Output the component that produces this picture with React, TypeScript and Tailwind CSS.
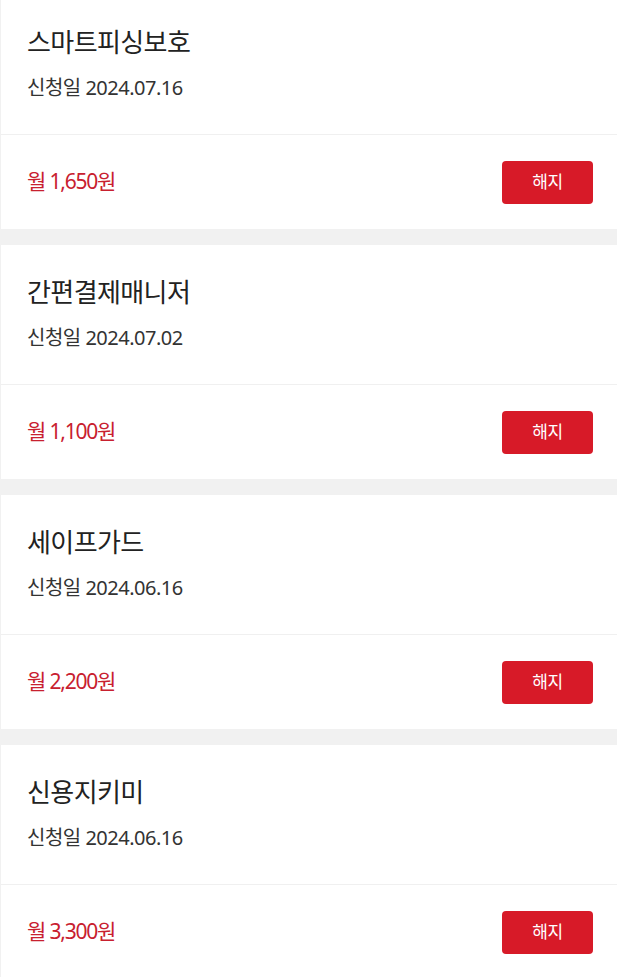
const services = [
  { name: "스마트피싱보호", date: "2024.07.16", price: "1,650" },
  { name: "간편결제매니저", date: "2024.07.02", price: "1,100" },
  { name: "세이프가드", date: "2024.06.16", price: "2,200" },
  { name: "신용지키미", date: "2024.06.16", price: "3,300" },
];

const font = { fontFamily: '"Noto Sans", "Noto Sans CJK KR", sans-serif' };

export default function App() {
  return (
    <div className="min-h-screen bg-[#f1f1f1] overflow-hidden" style={font}>
      <div className="-mt-[5px] flex flex-col gap-4">
        {services.map(({ name, date, price }) => (
          <article key={name} className="ml-[1px] bg-white">
            <div className="px-[26px] pt-[31px] pb-[32px] border-b border-[#f0f0f0]">
              <h2 className="text-[26px] leading-[32px] tracking-[-0.6px] text-[#222]">
                {name}
              </h2>
              <p className="mt-[16px] text-[20px] leading-[28px] tracking-[-0.5px] text-[#333]">
                신청일 {date}
              </p>
            </div>
            <div className="flex items-center justify-between pl-[26px] pr-[24px] h-[94px]">
              <span className="text-[21px] tracking-[-1.2px] text-[#c8202f]">
                월 {price}원
              </span>
              <button className="w-[91px] h-[43px] rounded-[4px] bg-[#d71a28] text-white text-[17px] tracking-[-0.5px]">
                해지
              </button>
            </div>
          </article>
        ))}
      </div>
    </div>
  );
}
